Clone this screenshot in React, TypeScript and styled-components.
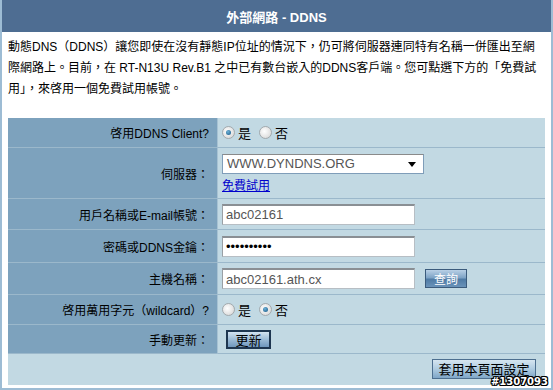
import React from 'react';
import styled, { createGlobalStyle } from 'styled-components';

const GlobalStyle = createGlobalStyle`
  html, body {
    margin: 0;
    padding: 0;
    background: #ffffff;
  }
  body {
    font-family: 'Liberation Sans', Arial, 'Noto Sans CJK TC', sans-serif;
    font-size: 12px;
    color: #000;
  }
`;

const Frame = styled.div`
  position: relative;
  box-sizing: border-box;
  width: 553px;
  height: 390px;
  border: 2px solid #9dbcd4;
  border-top: none;
  background: #fff;
  overflow: hidden;
`;

const Header = styled.div`
  height: 32px;
  margin: 0 -2px;
  background: #4e6d92;
  color: #fff;
  font-weight: bold;
  font-size: 13px;
  display: flex;
  align-items: center;
  justify-content: center;
`;

const Desc = styled.p`
  margin: 0;
  padding: 5px 6px 0 6px;
  line-height: 21px;
  font-size: 12px;
  height: 81px;
  box-sizing: border-box;
`;

const Table = styled.div`
  margin: 5px 6px 0 6px;
  display: grid;
  grid-template-columns: 210px 1fr;
`;

const Label = styled.div<{ $h: number }>`
  height: ${(p) => p.$h}px;
  box-sizing: border-box;
  background: #7da2bd;
  border-bottom: 1px solid #9bb8cb;
  border-right: 1px solid #a7c2d3;
  display: flex;
  align-items: center;
  justify-content: flex-end;
  padding-right: 8px;
  font-size: 12px;
`;

const Value = styled.div<{ $h: number; $column?: boolean }>`
  height: ${(p) => p.$h}px;
  box-sizing: border-box;
  background: #c2d9e3;
  border-bottom: 1px solid #9bb8cb;
  display: flex;
  flex-direction: ${(p) => (p.$column ? 'column' : 'row')};
  align-items: ${(p) => (p.$column ? 'flex-start' : 'center')};
  justify-content: ${(p) => (p.$column ? 'center' : 'flex-start')};
  gap: ${(p) => (p.$column ? '2px' : '10px')};
  padding-left: 4px;
`;

const Footer = styled.div`
  grid-column: 1 / span 2;
  height: 31px;
  background: #c2d9e3;
  display: flex;
  align-items: center;
  justify-content: flex-end;
  padding-right: 9px;
  padding-bottom: 2px;
  box-sizing: border-box;
`;

const RadioGroup = styled.label`
  display: inline-flex;
  align-items: center;
  gap: 3px;
  font-size: 13px;
`;

const Radio = styled.input.attrs({ type: 'radio' })`
  appearance: none;
  margin: 0;
  width: 13px;
  height: 13px;
  border-radius: 50%;
  border: 1px solid #a2a9ad;
  background: radial-gradient(circle at 40% 40%, #ffffff 0%, #e6e6e6 55%, #cfcfcf 100%);
  box-sizing: border-box;
  position: relative;

  &:checked::after {
    content: '';
    position: absolute;
    left: 3px;
    top: 3px;
    width: 5px;
    height: 5px;
    border-radius: 50%;
    background: radial-gradient(circle at 40% 35%, #6fb2d8 0%, #1d5f8c 90%);
  }
`;

const Choice = styled.div`
  display: flex;
  align-items: center;
  gap: 8px;
`;

const SelectBox = styled.div`
  position: relative;
  width: 202px;
  height: 20px;
  box-sizing: border-box;
  background: #fff;
  border: 1px solid #7f9db9;
  border-top-color: #8a8a8a;
  color: #555;
  font-size: 13px;
  line-height: 18px;
  padding-left: 4px;

  &::after {
    content: '';
    position: absolute;
    right: 7px;
    top: 7px;
    border-left: 4px solid transparent;
    border-right: 4px solid transparent;
    border-top: 5px solid #000;
  }
`;

const Link = styled.a`
  color: #0000cc;
  text-decoration: underline;
  font-size: 12px;
  cursor: pointer;
`;

const TextInput = styled.input`
  width: 193px;
  height: 21px;
  box-sizing: border-box;
  border: 1px solid #b7bec4;
  border-top: 2px solid #8a8f94;
  border-left-color: #9aa0a5;
  background: #fff;
  color: #555;
  font-family: 'Liberation Sans', Arial, sans-serif;
  font-size: 13px;
  padding: 0 3px;
  outline: none;
  &[type='password'] {
    color: #000;
  }
`;

const Row = styled.div`
  display: flex;
  align-items: center;
  gap: 10px;
`;

const QueryButton = styled.button`
  width: 42px;
  height: 19px;
  border: 1px solid #3b5b7c;
  background: linear-gradient(#b8d0e6 0%, #7fa4c6 45%, #4f7ba5 55%, #6a93b9 100%);
  color: #fff;
  font-family: 'Noto Sans CJK TC', sans-serif;
  font-size: 12px;
  padding: 0;
  line-height: 17px;
`;

const UpdateButton = styled.button`
  width: 45px;
  height: 19px;
  margin-left: 4px;
  border: 2px solid #1e3650;
  background: linear-gradient(#d3e3f0 0%, #9cbbd6 50%, #6f97bd 100%);
  color: #000;
  font-family: 'Noto Sans CJK TC', sans-serif;
  font-size: 13px;
  padding: 0;
  line-height: 15px;
`;

const ApplyButton = styled.button`
  width: 104px;
  height: 20px;
  border: 1px solid #4d6f8f;
  background: linear-gradient(#d6e5f0 0%, #aecbe0 50%, #7fa6c7 100%);
  color: #000;
  font-family: 'Noto Sans CJK TC', sans-serif;
  font-size: 13px;
  padding: 0;
  line-height: 18px;
`;

const Watermark = styled.div`
  position: absolute;
  right: 3px;
  bottom: 1px;
  font-family: 'DejaVu Sans', sans-serif;
  font-weight: bold;
  font-size: 10px;
  line-height: 11px;
  color: #fff;
  text-shadow: 1px 0 0 #000, -1px 0 0 #000, 0 1px 0 #000, 0 -1px 0 #000,
    1px 1px 0 #000, -1px -1px 0 #000, 1px -1px 0 #000, -1px 1px 0 #000;
`;

export default function App() {
  return (
    <>
      <GlobalStyle />
      <Frame>
        <Header>外部網路 - DDNS</Header>
        <Desc>
          動態DNS（DDNS）讓您即使在沒有靜態IP位址的情況下，仍可將伺服器連同特有名稱一併匯出至網
          際網路上。目前，在 RT-N13U Rev.B1 之中已有數台嵌入的DDNS客戶端。您可點選下方的「免費試
          用」，來啓用一個免費試用帳號。
        </Desc>
        <Table>
          <Label $h={30}>啓用DDNS Client?</Label>
          <Value $h={30}>
            <Choice>
              <RadioGroup>
                <Radio name="ddns" defaultChecked />是
              </RadioGroup>
              <RadioGroup>
                <Radio name="ddns" />否
              </RadioGroup>
            </Choice>
          </Value>

          <Label $h={51}>伺服器：</Label>
          <Value $h={51} $column>
            <SelectBox>WWW.DYNDNS.ORG</SelectBox>
            <Link>免費試用</Link>
          </Value>

          <Label $h={31}>用戶名稱或E-mail帳號：</Label>
          <Value $h={31}>
            <TextInput defaultValue="abc02161" />
          </Value>

          <Label $h={33}>密碼或DDNS金鑰：</Label>
          <Value $h={33}>
            <TextInput type="password" defaultValue="abcdefghij" />
          </Value>

          <Label $h={32}>主機名稱：</Label>
          <Value $h={32}>
            <Row>
              <TextInput defaultValue="abc02161.ath.cx" />
              <QueryButton>查詢</QueryButton>
            </Row>
          </Value>

          <Label $h={30}>啓用萬用字元（wildcard）?</Label>
          <Value $h={30}>
            <Choice>
              <RadioGroup>
                <Radio name="wild" />是
              </RadioGroup>
              <RadioGroup>
                <Radio name="wild" defaultChecked />否
              </RadioGroup>
            </Choice>
          </Value>

          <Label $h={29}>手動更新：</Label>
          <Value $h={29}>
            <UpdateButton>更新</UpdateButton>
          </Value>

          <Footer>
            <ApplyButton>套用本頁面設定</ApplyButton>
          </Footer>
        </Table>
        <Watermark>#1307093</Watermark>
      </Frame>
    </>
  );
}
